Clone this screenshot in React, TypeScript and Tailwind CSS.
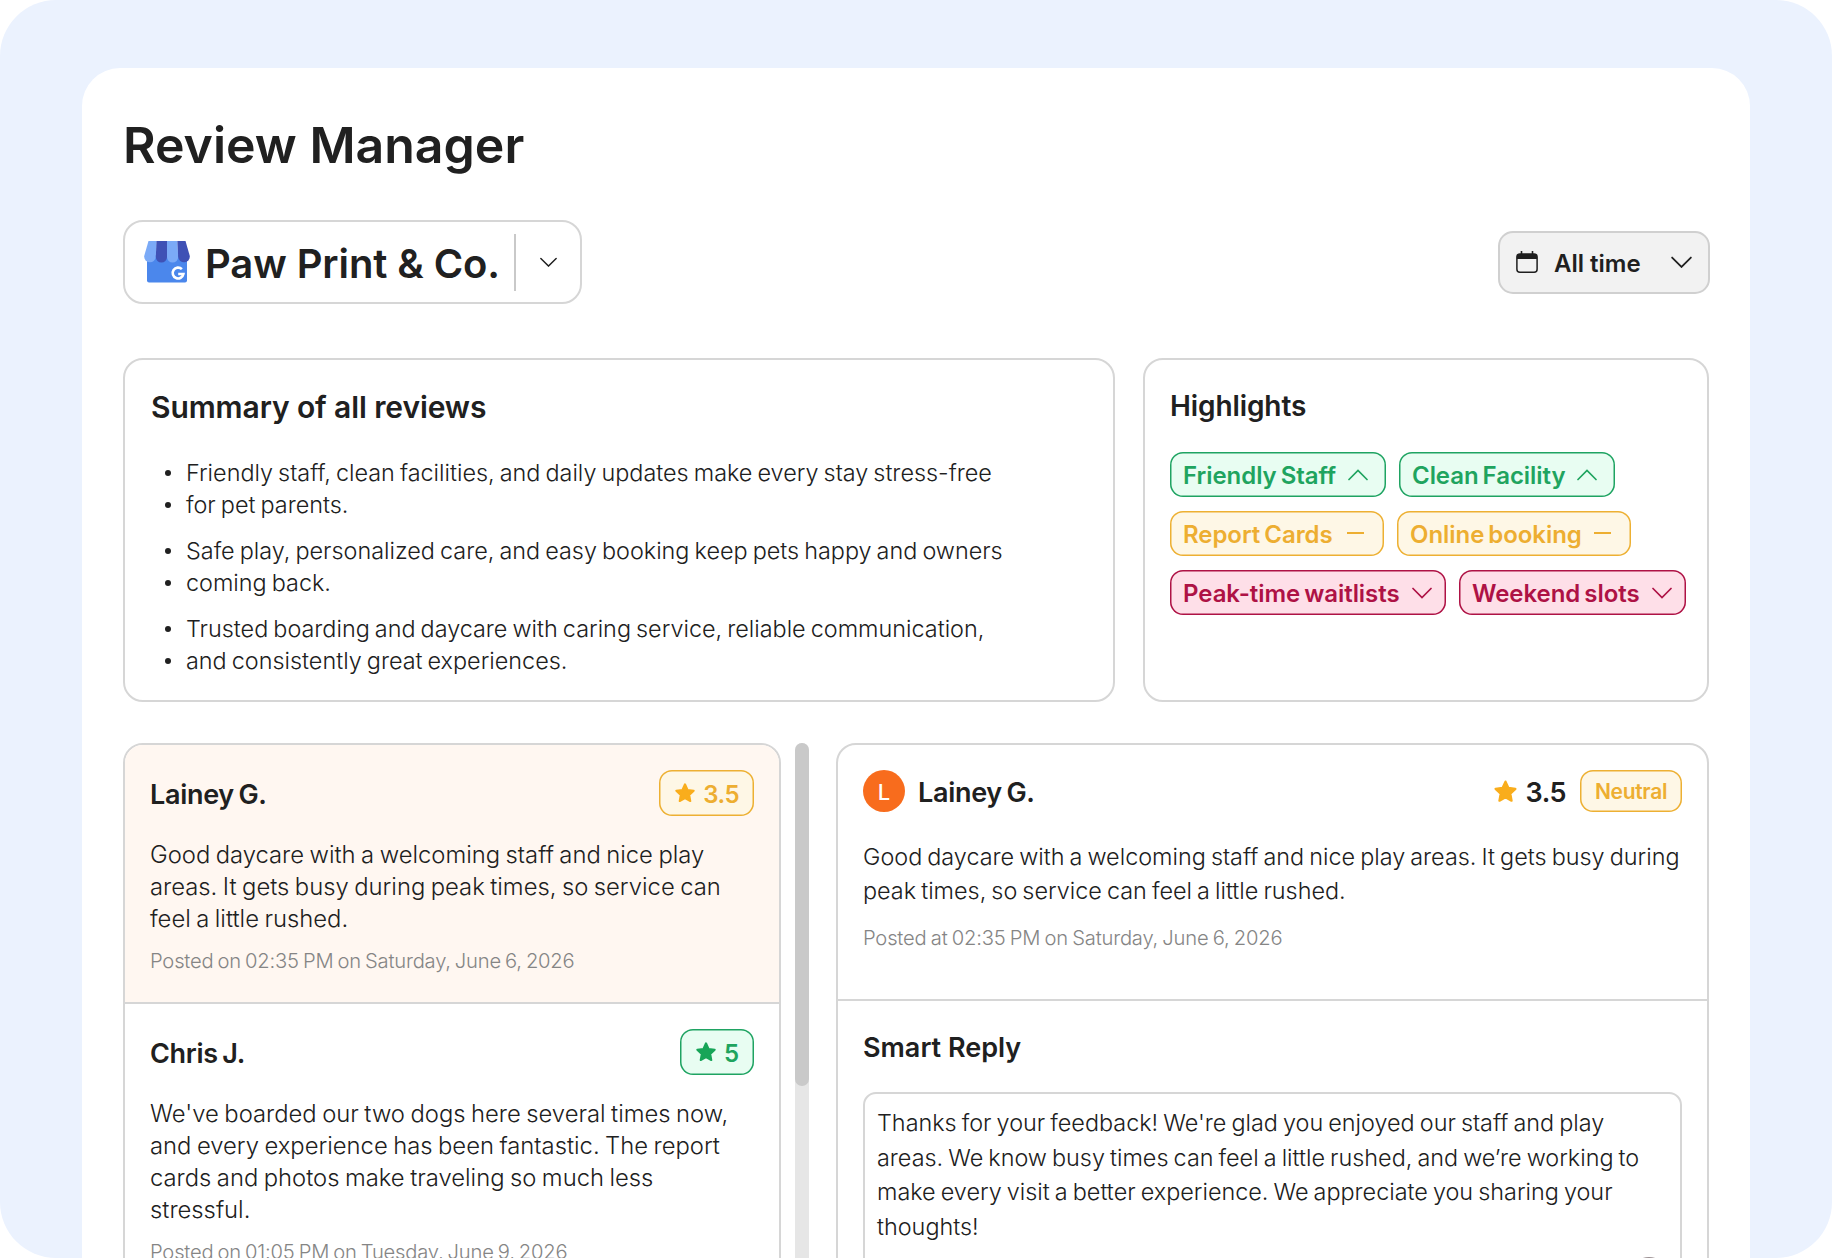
import type { ReactNode } from "react";

const StoreLogo = () => (
  <svg width="46" height="42" viewBox="0 0 46 42" className="shrink-0">
    <path d="M3 14h40v25.500a2 2 0 0 1-2 2H5a2 2 0 0 1-2-2z" fill="#4b87ec" />
    <path d="M4.500 0h8.200L11.800 16a5.800 5.800 0 0 1-11.600-1z" fill="#7baaf7" />
    <path d="M12.500 0H23v16a5.600 5.600 0 0 1-11.200 0z" fill="#3f51b5" />
    <path d="M23 0h10.300l.9 16A5.600 5.600 0 0 1 23 16z" fill="#7baaf7" />
    <path d="M33.300 0h8.200l4.300 15a5.800 5.800 0 0 1-11.600 1z" fill="#3f51b5" />
    <path
      d="M37.900 28.200a5.400 5.400 0 1 0 1.500 4.800h-5.200"
      fill="none"
      stroke="#fff"
      strokeWidth="2.600"
    />
  </svg>
);

const CalendarIcon = () => (
  <svg width="24" height="24" viewBox="0 0 24 24" fill="none" className="shrink-0">
    <rect x="1.900" y="4" width="20.200" height="18.200" rx="3" stroke="#1f1f1f" strokeWidth="1.500" />
    <path d="M1.900 9V6.500A2.500 2.500 0 0 1 4.400 4h15.200a2.500 2.500 0 0 1 2.500 2.500V9z" fill="#1f1f1f" />
    <path d="M6.500 1v4M17.500 1v4" stroke="#1f1f1f" strokeWidth="1.600" />
  </svg>
);

const Chevron = ({ width, up }: { width: number; up?: boolean }) => (
  <svg
    width={width}
    height={width / 2 + 2}
    viewBox="0 0 20 12"
    fill="none"
    className={up ? "shrink-0 rotate-180" : "shrink-0"}
  >
    <path d="M1 1.500l9 9 9-9" stroke="currentColor" strokeWidth="1.700" strokeLinecap="round" />
  </svg>
);

const Star = ({ size }: { size: number }) => (
  <svg width={size} height={size} viewBox="0 0 24 24" fill="currentColor" className="shrink-0">
    <path
      d="M12 2.500l2.800 6.100 6.700.9-4.900 4.700 1.200 6.600L12 17.600l-5.800 3.200 1.200-6.600-4.900-4.700 6.700-.9z"
      stroke="currentColor"
      strokeWidth="2.200"
      strokeLinejoin="round"
    />
  </svg>
);

const tones = {
  good: "bg-[#e8fdf2] text-[#1fa45f] shadow-[inset_0_0_0_1.5px_#1fa362]",
  neutral: "bg-[#fef7e6] text-[#edae31] shadow-[inset_0_0_0_1.5px_#edb033]",
  bad: "bg-[#fedfe8] text-[#ae1245] shadow-[inset_0_0_0_1.5px_#ae1245]",
};

type Tone = keyof typeof tones;

const Tag = ({ label, tone, className }: { label: string; tone: Tone; className: string }) => (
  <div
    className={`flex h-[45px] items-center justify-between rounded-[13px] pl-[13px] text-[24px] font-semibold tracking-[-0.05px] [word-spacing:-2px] ${
      tone === "bad" ? "pr-[14px]" : "pr-[18px]"
    } ${tones[tone]} ${className}`}
  >
    <span className="pt-[2px]">{label}</span>
    {tone === "neutral" ? (
      <span className="mb-px mr-[2px] h-[1.5px] w-[17px] bg-current" />
    ) : (
      <Chevron width={20} up={tone === "good"} />
    )}
  </div>
);

const Lines = ({ lines }: { lines: string[] }) => (
  <>
    {lines.map((line) => (
      <span key={line} className="block whitespace-nowrap">
        {line}
      </span>
    ))}
  </>
);

const summary = [
  [
    "Friendly staff, clean facilities, and daily updates make every stay stress-free",
    "for pet parents.",
  ],
  [
    "Safe play, personalized care, and easy booking keep pets happy and owners",
    "coming back.",
  ],
  [
    "Trusted boarding and daycare with caring service, reliable communication,",
    "and consistently great experiences.",
  ],
];

const reviews: {
  name: string;
  rating: string;
  tone: Tone;
  lines: string[];
  posted: string;
  selected?: boolean;
}[] = [
  {
    name: "Lainey G.",
    rating: "3.5",
    tone: "neutral",
    lines: [
      "Good daycare with a welcoming staff and nice play",
      "areas. It gets busy during peak times, so service can",
      "feel a little rushed.",
    ],
    posted: "Posted on 02:35 PM on Saturday, June 6, 2026",
    selected: true,
  },
  {
    name: "Chris J.",
    rating: "5",
    tone: "good",
    lines: [
      "We've boarded our two dogs here several times now,",
      "and every experience has been fantastic. The report",
      "cards and photos make traveling so much less",
      "stressful.",
    ],
    posted: "Posted on 01:05 PM on Tuesday, June 9, 2026",
  },
];

const Panel = ({ className, children }: { className: string; children: ReactNode }) => (
  <section className={`border-2 border-[#d6d6d6] ${className}`}>{children}</section>
);

const App = () => {
  return (
    <div className="h-[1258px] w-[1832px] overflow-hidden rounded-[56px] bg-[#ebf2fe] pl-[82px] pt-[68px] font-['Inter',sans-serif] text-[#202020]">
      <main className="h-[1300px] w-[1668px] rounded-t-[38px] bg-white pl-[41px] pt-[44px]">
        <h1 className="h-[66px] text-[50px] font-semibold leading-[66px]">Review Manager</h1>

        <div className="mt-[42px] flex h-[84px] w-[1587px] items-center justify-between">
          <div className="flex h-[84px] w-[459px] items-center rounded-[20px] border-2 border-[#d6d6d6] pl-[19px]">
            <StoreLogo />
            <span className="ml-[15px] w-[309px] whitespace-nowrap pt-[3px] text-[40px] font-semibold tracking-[-0.1px]">
              Paw Print & Co.
            </span>
            <span className="h-[57px] w-[1.5px] bg-[#c9c9c9]" />
            <span className="ml-[24px]">
              <Chevron width={17} />
            </span>
          </div>
          <div className="flex h-[63px] w-[212px] items-center rounded-[15px] border-2 border-[#d0d0d0] bg-[#f2f2f2] pl-[15px]">
            <CalendarIcon />
            <span className="ml-[15px] w-[117px] pt-[3px] text-[24px] font-semibold">All time</span>
            <Chevron width={21} />
          </div>
        </div>

        <div className="mt-[54px] flex gap-[28px]">
          <Panel className="h-[344px] w-[992px] rounded-[20px] pl-[26px] pt-[27px]">
            <h2 className="text-[30px] font-semibold leading-[40px] tracking-[-0.1px]">
              Summary of all reviews
            </h2>
            <ul className="mt-[30px] flex flex-col gap-[13.6px] text-[23.4px] font-[350] leading-[32.2px] [word-spacing:-1.5px]">
              {summary.map((group) => (
                <div key={group[0]}>
                  {group.map((line) => (
                    <li key={line} className="flex items-center whitespace-nowrap">
                      <span className="ml-[14px] mr-[15px] size-[6px] rounded-full bg-[#202020]" />
                      {line}
                    </li>
                  ))}
                </div>
              ))}
            </ul>
          </Panel>

          <Panel className="h-[344px] w-[566px] rounded-[20px] pl-[25px] pt-[27px]">
            <h2 className="text-[28px] font-semibold leading-[38px] tracking-[-0.1px]">
              Highlights
            </h2>
            <div className="mt-[27px] flex flex-col gap-[14.2px]">
              <div className="flex gap-[13px]">
                <Tag label="Friendly Staff" tone="good" className="w-[216px]" />
                <Tag label="Clean Facility" tone="good" className="w-[216px]" />
              </div>
              <div className="flex gap-[13px]">
                <Tag label="Report Cards" tone="neutral" className="w-[214px]" />
                <Tag label="Online booking" tone="neutral" className="w-[234px]" />
              </div>
              <div className="flex gap-[13px]">
                <Tag label="Peak-time waitlists" tone="bad" className="w-[276px]" />
                <Tag label="Weekend slots" tone="bad" className="w-[227px]" />
              </div>
            </div>
          </Panel>
        </div>

        <div className="mt-[41px] flex">
          <Panel className="h-[600px] w-[658px] overflow-hidden rounded-t-[20px]">
            {reviews.map((review) => (
              <article
                key={review.name}
                className={`border-b-2 border-[#d6d6d6] px-[25px] pb-[25px] pt-[25px] ${
                  review.selected ? "bg-[#fff7f1]" : "bg-white"
                }`}
              >
                <div className="flex h-[46px] items-center justify-between">
                  <h3 className="pt-[4px] text-[27px] font-semibold tracking-[-0.3px] [word-spacing:-2px]">
                    {review.name}
                  </h3>
                  <div
                    className={`flex h-[46px] min-w-[74px] items-center gap-[7px] rounded-[13px] px-[15px] text-[24px] font-semibold tracking-[-0.5px] ${tones[review.tone]}`}
                  >
                    <span className={review.tone === "neutral" ? "text-[#f9ad1c]" : "text-[#17a558]"}>
                      <Star size={22} />
                    </span>
                    <span className="pt-[3px]">{review.rating}</span>
                  </div>
                </div>
                <p className="mt-[23px] text-[23.8px] font-[350] leading-[32px] [word-spacing:-1.2px]">
                  <Lines lines={review.lines} />
                </p>
                <p className="mt-[10px] whitespace-nowrap text-[20.2px] font-[350] leading-[32px] tracking-[-0.2px] text-[#858585] [word-spacing:-1.4px]">
                  {review.posted}
                </p>
              </article>
            ))}
          </Panel>

          <div className="ml-[14px] h-[600px] w-[14px] rounded-t-full bg-[#e6e6e6]">
            <div className="h-[343px] rounded-full bg-[#c9c9c9]" />
          </div>

          <Panel className="ml-[27px] h-[600px] w-[873px] rounded-t-[20px]">
            <div className="h-[256px] border-b-2 border-[#d6d6d6] pl-[25px] pr-[25px] pt-[25px]">
              <div className="flex h-[42px] items-center">
                <span className="flex size-[42px] items-center justify-center rounded-full bg-[#f86c1d] pt-[2px] text-[22px] font-medium text-white">
                  L
                </span>
                <h3 className="ml-[13px] pt-[5px] text-[27px] font-semibold tracking-[-0.3px] [word-spacing:-2px]">
                  Lainey G.
                </h3>
                <span className="ml-auto text-[#f9ad1c]">
                  <Star size={25} />
                </span>
                <span className="ml-[8px] pt-[5px] text-[27px] font-semibold tracking-[-0.5px]">
                  3.5
                </span>
                <span
                  className={`ml-[14px] flex h-[42px] w-[102px] items-center justify-center rounded-[13px] pt-[2px] text-[21px] font-semibold tracking-[-0.3px] ${tones.neutral}`}
                >
                  Neutral
                </span>
              </div>
              <p className="mt-[28px] text-[23.4px] font-[350] leading-[34px] [word-spacing:-1.5px]">
                <Lines
                  lines={[
                    "Good daycare with a welcoming staff and nice play areas. It gets busy during",
                    "peak times, so service can feel a little rushed.",
                  ]}
                />
              </p>
              <p className="mt-[14px] text-[20.2px] font-[350] leading-[32px] tracking-[-0.2px] text-[#858585] [word-spacing:-1.2px]">
                Posted at 02:35 PM on Saturday, June 6, 2026
              </p>
            </div>
            <div className="pl-[25px] pr-[25px] pt-[28px]">
              <h2 className="text-[27px] font-semibold leading-[38px]">Smart Reply</h2>
              <div className="mt-[25px] h-[240px] rounded-[13px] border-2 border-[#d6d6d6] pl-[12px] pt-[12px] text-[23.4px] font-[350] leading-[34.5px] [word-spacing:-1.5px]">
                <Lines
                  lines={[
                    "Thanks for your feedback! We're glad you enjoyed our staff and play",
                    "areas. We know busy times can feel a little rushed, and we’re working to",
                    "make every visit a better experience. We appreciate you sharing your",
                    "thoughts!",
                  ]}
                />
                <div className="ml-auto mr-[11px] mt-[12.5px] size-[40px] rounded-full bg-[#9b8f92]" />
              </div>
            </div>
          </Panel>
        </div>
      </main>
    </div>
  );
};

export default App;
